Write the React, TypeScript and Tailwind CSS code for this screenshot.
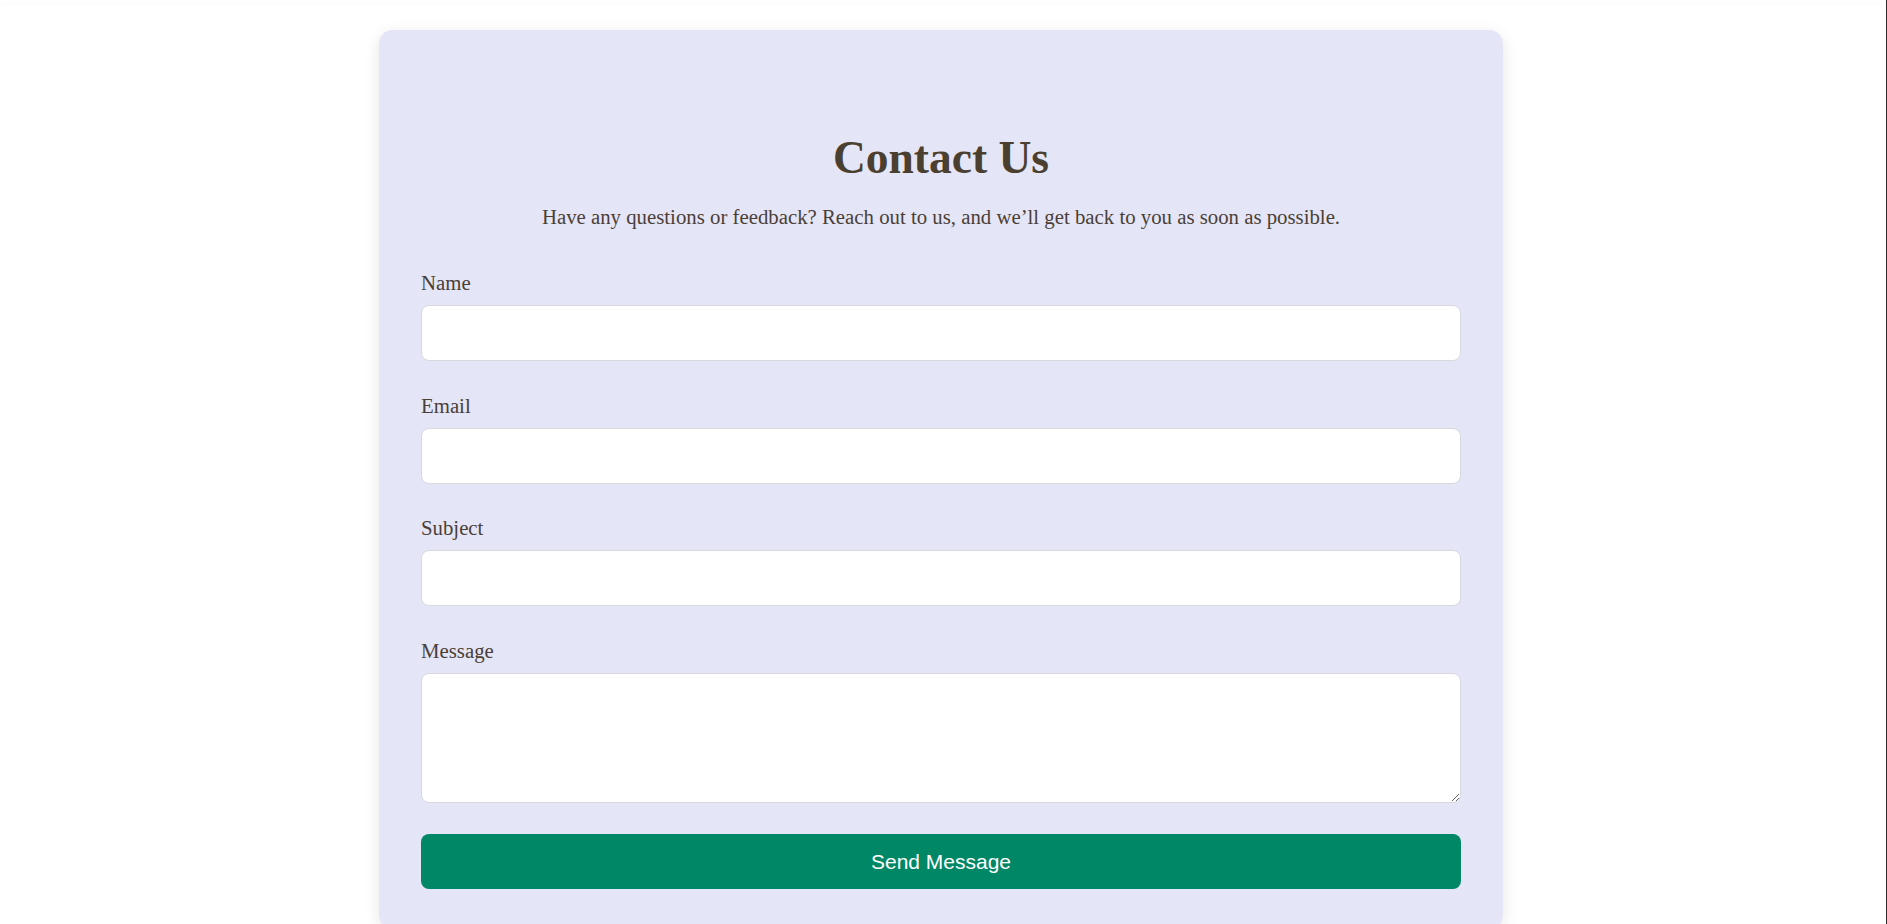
import React from "react";

const serif = { fontFamily: '"Liberation Serif", "Times New Roman", serif' };

function Field({ label, id, textarea }: { label: string; id: string; textarea?: boolean }) {
  return (
    <div className="flex flex-col">
      <label htmlFor={id} className="text-[20.8px] leading-[24px] text-[#4a3f36] mb-[10px]">
        {label}
      </label>
      {textarea ? (
        <textarea
          id={id}
          className="h-[130px] w-full rounded-[8px] border border-[#d8d8e0] bg-white px-3 py-2 outline-none"
        />
      ) : (
        <input
          id={id}
          type="text"
          className="h-[56px] w-full rounded-[8px] border border-[#d8d8e0] bg-white px-3 outline-none"
        />
      )}
    </div>
  );
}

export default function App() {
  return (
    <div className="min-h-[924px] h-[924px] overflow-hidden bg-white border-r border-[#2a2a2a] relative" style={serif}>
      <div className="absolute top-0 left-0 right-0 h-[1px] shadow-[0_1px_6px_rgba(0,0,0,0.10)]" />
      <div className="flex justify-center pr-[4px] pt-[30px]">
        <div className="w-[1124px] rounded-[14px] bg-[#e5e5f8] shadow-[0_4px_16px_rgba(0,0,0,0.10)] px-[42px] pt-[103px] pb-[40px]">
          <h1 className="text-center text-[45.5px] leading-[50px] font-bold text-[#4b4030]">Contact Us</h1>
          <p className="mt-[22px] text-center text-[20.8px] leading-[24px] text-[#4a3f36]">
            Have any questions or feedback? Reach out to us, and we’ll get back to you as soon as possible.
          </p>
          <form className="mt-[42px] flex flex-col gap-[32.5px]" onSubmit={(e) => e.preventDefault()}>
            <Field label="Name" id="name" />
            <Field label="Email" id="email" />
            <Field label="Subject" id="subject" />
            <Field label="Message" id="message" textarea />
            <button
              type="submit"
              className="mt-[-1px] h-[55px] w-full rounded-[8px] bg-[#008766] text-white text-[21px]"
              style={{ fontFamily: '"Liberation Sans", Arial, sans-serif' }}
            >
              Send Message
            </button>
          </form>
        </div>
      </div>
    </div>
  );
}
